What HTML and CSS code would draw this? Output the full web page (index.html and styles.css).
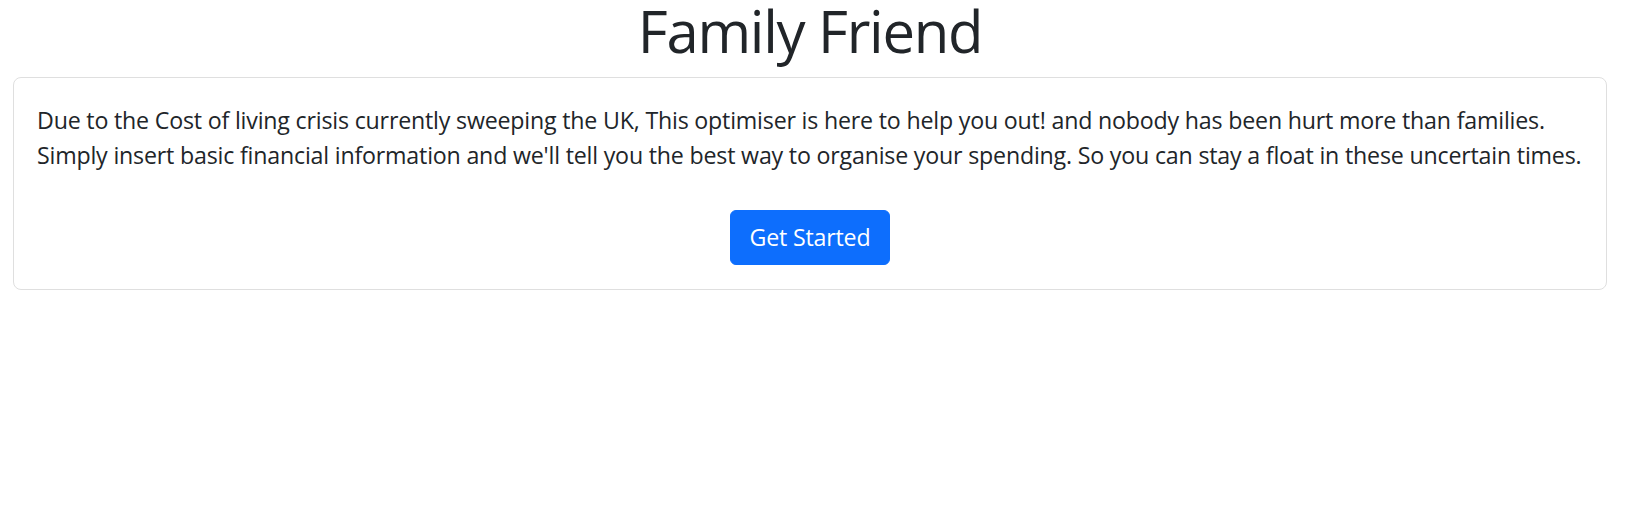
FILE: index.html
```html
<!DOCTYPE html>
<html lang="en">
<head>
<meta charset="utf-8">
<title>Family Friend</title>
<link rel="stylesheet" href="styles.css">
</head>
<body>
<main class="page">
  <h1 class="title">Family Friend</h1>
  <section class="card">
    <p class="intro">Due to the Cost of living crisis currently sweeping the UK, This optimiser is here to help you out! and nobody has been hurt more than families.<br>Simply insert basic financial information and we'll tell you the best way to organise your spending. So you can stay a float in these uncertain times.</p>
    <div class="actions">
      <button class="btn-primary" type="button">Get Started</button>
    </div>
  </section>
</main>
</body>
</html>
```

FILE: styles.css
```css
html, body {
  margin: 0;
  padding: 0;
  background: #ffffff;
}

body {
  font-family: "Open Sans", "Noto Sans", sans-serif;
  color: #212529;
  font-size: 23.2px;
  line-height: 34.8px;
  letter-spacing: -0.19px;
}

.page {
  padding: 0 21px 0 13px;
}

.title {
  margin: 0 0 15px 0;
  font-size: 58px;
  line-height: 62px;
  font-weight: 400;
  letter-spacing: -1.3px;
  text-align: center;
  color: #212529;
}

.card {
  border: 1px solid #dfdfdf;
  border-radius: 8px;
  padding: 25px 23px 24px 23px;
}

.intro {
  margin: 0;
  white-space: nowrap;
}

.actions {
  display: flex;
  justify-content: center;
  margin-top: 37px;
}

.btn-primary {
  font-family: inherit;
  font-size: 23.2px;
  line-height: 35px;
  letter-spacing: -0.19px;
  padding: 9px 18.5px;
  border: 1px solid #0d6efd;
  border-radius: 6px;
  background: #0d6efd;
  color: #ffffff;
}
```
